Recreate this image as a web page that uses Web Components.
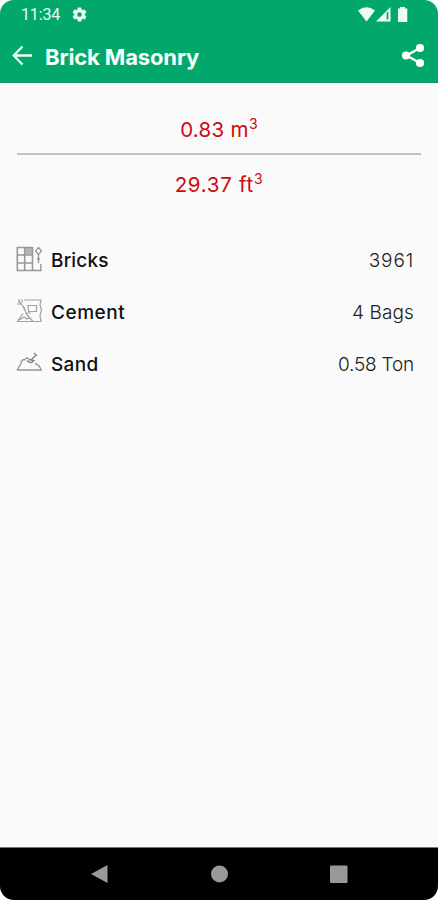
<!DOCTYPE html>
<html lang="en"><head><meta charset="utf-8"><title>Brick Masonry</title>
<style>html,body{margin:0;background:#fff}body{width:438px;height:900px;overflow:hidden}</style></head>
<body>
<phone-screen>
  <status-bar slot="top">11:34</status-bar>
  <app-bar slot="top">Brick Masonry</app-bar>
  <volume-summary><volume-value style="--ls:.3px">0.83 m<sup>3</sup></volume-value><volume-value style="--ls:.7px">29.37 ft<sup>3</sup></volume-value></volume-summary>
  <material-list>
    <material-row kind="bricks" style="--ls:.15px;--vs:.85px;--end:24px">Bricks<span slot="value">3961</span></material-row>
    <material-row kind="cement" style="--ls:.55px;--vs:.1px">Cement<span slot="value">4 Bags</span></material-row>
    <material-row kind="sand" style="--ls:.3px;--vs:-.2px">Sand<span slot="value">0.58 Ton</span></material-row>
  </material-list>
  <nav-bar slot="bottom"></nav-bar>
</phone-screen>
<script>
const define = (name, html, init) => customElements.define(name, class extends HTMLElement {
  constructor() {
    super();
    this.attachShadow({mode: 'open'}).innerHTML = html;
  }
  connectedCallback() { if (init) init(this); }
});

define('phone-screen', `<style>
:host{display:flex;flex-direction:column;width:438px;height:900px;border-radius:14px;overflow:hidden;background:#fafafa;font-family:Inter,"Liberation Sans",sans-serif}
main{flex:1;min-height:0}
</style><slot name="top"></slot><main><slot></slot></main><slot name="bottom"></slot>`);

define('status-bar', `<style>
:host{display:flex;align-items:center;height:29px;box-sizing:border-box;padding:0 30px 0 21px;background:#02a86b;color:#e9fbf2;font:16px/29px Roboto,sans-serif;letter-spacing:-.15px}
.gear{margin-left:11px}.spacer{flex:1}svg{display:block;flex:none}
</style><slot></slot>
<svg class="gear" width="17" height="17" viewBox="0 0 24 24" fill="#f2fff9" stroke="#f2fff9" stroke-width=".6"><path d="M19.14 12.94a7 7 0 0 0 0-1.88l2.03-1.58a.5.5 0 0 0 .12-.61l-1.92-3.32a.5.5 0 0 0-.59-.22l-2.39.96a7 7 0 0 0-1.62-.94l-.36-2.54a.5.5 0 0 0-.48-.41h-3.84a.5.5 0 0 0-.47.41l-.36 2.54a7 7 0 0 0-1.62.94l-2.39-.96a.5.5 0 0 0-.59.22L2.74 8.87a.5.5 0 0 0 .12.61l2.03 1.58a7 7 0 0 0 0 1.88l-2.03 1.58a.5.5 0 0 0-.12.61l1.92 3.32c.12.22.37.29.59.22l2.39-.96c.5.38 1.03.7 1.62.94l.36 2.54c.05.24.24.41.48.41h3.84c.24 0 .44-.17.47-.41l.36-2.54a7 7 0 0 0 1.62-.94l2.39.96c.22.08.47 0 .59-.22l1.92-3.32a.5.5 0 0 0-.12-.61zM12 15.6a3.6 3.6 0 1 1 0-7.2 3.6 3.6 0 0 1 0 7.2z"/></svg>
<div class="spacer"></div>
<svg width="51" height="18" viewBox="0 0 51 18" fill="#effcf5"><path d="M1 4.500Q9.500-2 18 4.500L9.500 15.500z"/><path d="M19 15.500L33.500 1V15.500z"/><path d="M30.500 6v7.500" stroke="#0b9d66" stroke-width="1.700"/><path d="M41 2.500h2V1h5v1.500h2.300V16H41z"/></svg>`);

define('app-bar', `<style>
:host{display:flex;align-items:center;height:54px;box-sizing:border-box;padding:0 13px 0 12px;background:#02a86b;color:#f5fff9;border-bottom:1px solid #129160;font-size:22px;font-weight:700;letter-spacing:-.13px}
.title{margin:3px 0 0 12px;flex:1;line-height:30px}svg{display:block}
</style>
<svg width="21" height="22" viewBox="0 0 21 22" fill="none" stroke="#effcf5" stroke-width="2.300"><path d="M20 10.500H2M10.500 1.500L1.700 10.500l8.800 9"/></svg>
<div class="title"><slot></slot></div>
<svg width="24" height="26" viewBox="0 0 24 26" fill="#fff"><path d="M19 5L5.500 12.500L19 20" fill="none" stroke="#fff" stroke-width="2.300"/><circle cx="19" cy="5" r="4.100"/><circle cx="5" cy="12.500" r="4.100"/><circle cx="19" cy="20" r="4.100"/></svg>`);

define('volume-value', `<style>
:host{display:block;text-align:center;color:#cc0a10;font-size:20.500px;line-height:30px;letter-spacing:var(--ls)}
::slotted(sup){font-size:14px;line-height:0;vertical-align:8px}
</style><slot></slot>`);

define('volume-summary', `<style>
:host{display:flex;flex-direction:column;padding:32px 17px 0}
hr{order:1;width:100%;height:2px;margin:8px 0 15px;border:0;background:#c2c2c2}
::slotted(:last-child){order:2}
</style><slot></slot><hr>`);

define('material-list', `<style>:host{display:flex;flex-direction:column;padding-top:33px}</style><slot></slot>`);

const icons = {
  bricks: '<path d="M9 2h7v6.500H9z" fill="#b5b5b5"/><path stroke="#999" stroke-width="1.600" d="M1 1.500h15.500M1 9h15.500M1 17h15.500M1 24.500h24.500M1.300 1v24M8.700 1v24M16.500 1v24"/><path stroke="#999" stroke-width="1.400" d="M22.500 1.500l3 3.500-3 3.500-3-3.500zM22.500 9v8M21 13h3M24.800 18v7"/>',
  cement: '<path stroke="#a2a2a2" stroke-width="1.200" d="M8 2h17l-1 5 1.500 5-1.500 6 1 5.500H1.500L7 15.500M10 15.500l7 8M12 7.500h8.500v6h-8zM7 8l3 7h5M3 22l5-3 3 2 3-2"/><path stroke="#999" d="M2 3l4 4M3 1l1 4M6 1v4M1 6h5M6 7l3 4"/>',
  sand: '<path stroke="#969696" stroke-width="1.300" d="M1 20h25M1 20L5 13.500q0-4 4-4 2-3 4 0M19 13.500q4 1 6 6"/><path stroke="#858585" stroke-width="1.400" d="M11 10.500q4 4 7 0l-5-1M15 9l3 2M16 9l4-4M18 3l3 3"/>'
};
define('material-row', `<style>
:host{display:flex;align-items:center;height:52px;box-sizing:border-box;padding:0 var(--end,24px) 0 16px;font-size:19px;color:#111}
svg{display:block;margin-right:8px;fill:none;stroke-width:1}
.name,.value{padding-top:4px;line-height:26px}
.name{flex:1;font-weight:500;letter-spacing:var(--ls)}
.value{font-weight:300;color:#222;letter-spacing:var(--vs)}
</style><svg width="27" height="26" viewBox="0 0 27 26"></svg><div class="name"><slot></slot></div><div class="value"><slot name="value"></slot></div>`,
el => { el.shadowRoot.querySelector('svg').innerHTML = icons[el.getAttribute('kind')]; });

define('nav-bar', `<style>
:host{display:block;height:53px;background:#000;box-sizing:border-box;border-top:1px solid #777}
svg{display:block}
</style><svg width="438" height="52" viewBox="0 0 438 52" fill="#999"><path d="M91 26L107.500 17V35z"/><circle cx="219.500" cy="26" r="8.500"/><rect x="330" y="17.500" width="17.500" height="17.500" rx="1"/></svg>`);
</script>
</body></html>
